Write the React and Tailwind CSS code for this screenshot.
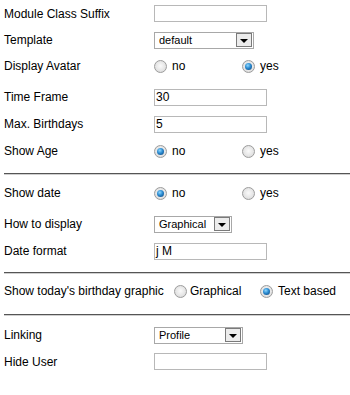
import React from 'react'

const Radio = ({ checked }) => (
  <span className="inline-flex w-[13px] h-[13px] shrink-0 items-center justify-center rounded-full border border-[#9c9c9c] bg-[radial-gradient(circle_at_50%_45%,#fafafa_0%,#e4e4e4_60%,#cfcfcf_100%)]">
    {checked && (
      <span className="w-[7px] h-[7px] rounded-full bg-[radial-gradient(circle_at_40%_35%,#8fd8ff_0%,#2a8ad0_45%,#0a3c70_100%)]" />
    )}
  </span>
)

const RadioPair = ({ options, selected }) => (
  <div className="flex items-center">
    <label className="flex items-center w-[88px]">
      <Radio checked={selected === 0} />
      <span className="ml-[5px]">{options[0]}</span>
    </label>
    <label className="flex items-center">
      <Radio checked={selected === 1} />
      <span className="ml-[5px]">{options[1]}</span>
    </label>
  </div>
)

const TextInput = ({ value = '' }) => (
  <div className="flex items-center w-[113px] h-[17px] border border-[#b8b8b8] bg-white pl-[1px] text-[12px] text-black">
    {value}
  </div>
)

const Select = ({ value, width }) => (
  <div className={`flex items-center justify-between h-[17px] border border-[#a8a8a8] bg-white ${width}`}>
    <span className="pl-[4px] text-[11px] text-black">{value}</span>
    <span className="flex items-center justify-center w-[16px] h-[14px] mr-[1px] border border-[#7a7a7a] bg-[#ececec]">
      <span className="mt-[2px] w-0 h-0 border-x-[4px] border-x-transparent border-t-[4px] border-t-black" />
    </span>
  </div>
)

const Row = ({ label, height, children }) => (
  <div className={`flex items-center ${height}`}>
    <div className="w-[154px] pl-[4px] shrink-0">{label}</div>
    {children}
  </div>
)

const Divider = ({ margin }) => (
  <div className={`ml-[4px] h-0 border-t border-t-[#555555] border-b border-b-[#cfcfcf] ${margin}`} />
)

const App = () => {
  return (
    <div className="w-[350px] h-[395px] bg-white text-[12px] text-black overflow-hidden font-['Liberation_Sans',Arial,sans-serif]">
      <Row label="Module Class Suffix" height="h-[27px]">
        <TextInput />
      </Row>
      <Row label="Template" height="h-[26px]">
        <Select value="default" width="w-[100px]" />
      </Row>
      <Row label="Display Avatar" height="h-[26px]">
        <RadioPair options={['no', 'yes']} selected={1} />
      </Row>
      <Row label="Time Frame" height="h-[36px]">
        <TextInput value="30" />
      </Row>
      <Row label="Max. Birthdays" height="h-[18px]">
        <TextInput value="5" />
      </Row>
      <Row label="Show Age" height="h-[36px]">
        <RadioPair options={['no', 'yes']} selected={0} />
      </Row>

      <Divider margin="mt-[4px]" />

      <Row label="Show date" height="h-[36px]">
        <RadioPair options={['no', 'yes']} selected={0} />
      </Row>
      <Row label="How to display" height="h-[26px]">
        <Select value="Graphical" width="w-[78px]" />
      </Row>
      <Row label="Date format" height="h-[28px]">
        <TextInput value="j M" />
      </Row>

      <Divider margin="mt-[7px]" />

      {/* today's birthday row */}
      <div className="flex items-center h-[34px] pl-[4px]">
        <span className="w-[170px] shrink-0">Show today's birthday graphic</span>
        <label className="flex items-center w-[86px]">
          <Radio />
          <span className="ml-[3px]">Graphical</span>
        </label>
        <label className="flex items-center">
          <Radio checked />
          <span className="ml-[5px]">Text based</span>
        </label>
      </div>

      <Divider margin="mt-[6px]" />

      <div className="mt-[6px]">
        <Row label="Linking" height="h-[26px]">
          <Select value="Profile" width="w-[89px]" />
        </Row>
        <Row label="Hide User" height="h-[27px]">
          <TextInput />
        </Row>
      </div>
    </div>
  )
}

export default App
